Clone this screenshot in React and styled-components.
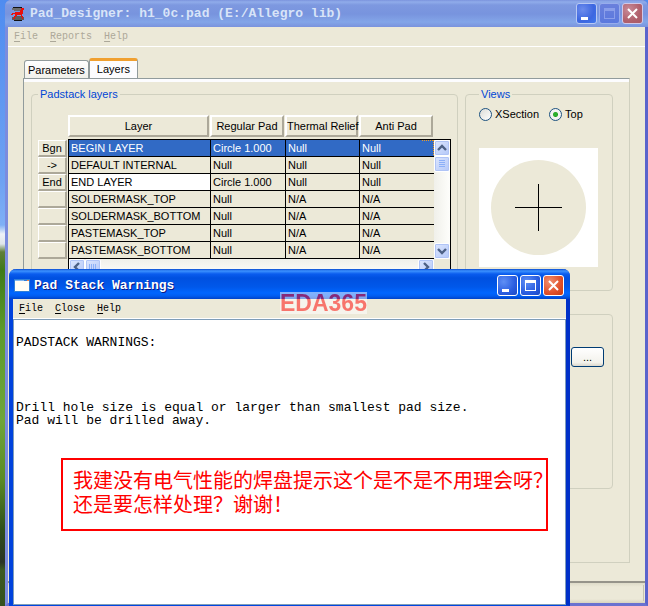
import React, { useState } from "react";
import styled, { createGlobalStyle, css } from "styled-components";

const sans = `"Liberation Sans", sans-serif`;
const mono = `"Liberation Mono", monospace`;
const face = "#ece9d8";
const line = "#d0d0bf";

const GlobalStyle = createGlobalStyle`
  * {
    box-sizing: border-box;
  }
  body {
    margin: 0;
    font-family: ${sans};
    font-size: 11px;
    line-height: 16px;
    color: #000;
  }
  button {
    margin: 0;
    padding: 0;
    border: 0;
    font: inherit;
    color: inherit;
    background: none;
  }
`;

const Desktop = styled.div`
  position: relative;
  min-height: 100vh;
  padding-left: 5px;
  display: flex;
  overflow: hidden;
  background: linear-gradient(
    #4f8cf0 0,
    #6ea2f2 180px,
    #7fb0f6 225px,
    #eef2f8 234px,
    #dfe6ea 244px,
    #5f7f3a 252px,
    #3f7a18 270px,
    #5c9a2c 330px,
    #6fa53a 420px,
    #5a8a25 480px,
    #2f4f1c 530px,
    #2a3326 562px,
    #3c5a22 570px,
    #34501e 100%
  );
`;

/* main window */

const MainWindow = styled.div`
  flex: 1;
  display: flex;
  flex-direction: column;
  border: solid #7b8cde;
  border-width: 0 3px 3px;
  border-right-color: #5a64cc;
  border-bottom-color: #6a72d0;
  border-radius: 6px 6px 0 0;
  background: ${face};
`;

const TitleBar = styled.div`
  display: flex;
  align-items: center;
  gap: 4px;
  font-family: ${mono};
  font-size: 13px;
  font-weight: bold;
  white-space: nowrap;

  h1 {
    flex: 1;
    margin: 0;
    font-size: 13px;
  }
  ${({ $active }) =>
    $active
      ? css`
          height: 30px;
          margin: 0 -4px;
          padding: 3px 6px 0 5px;
          color: #fff;
          text-shadow: 1px 1px 0 #0a1883;
          background: linear-gradient(
            #0a4bd0 0,
            #3c92ff 2px,
            #0a5cee 5px,
            #0050e0 9px,
            #0058ea 18px,
            #0066ff 24px,
            #005cf0 27px,
            #0042c8 100%
          );
          border-radius: 7px 7px 0 0;
        `
      : css`
          height: 27px;
          margin: 0 -3px;
          padding: 0 5px;
          color: #d8e4f8;
          background: linear-gradient(
            #7b93dd 0,
            #90acea 2px,
            #7d98e0 5px,
            #7894de 14px,
            #83a5e8 22px,
            #7a93dd 100%
          );
          border-radius: 6px 6px 0 0;
        `}
`;

const Caption = styled.div`
  display: flex;
  gap: 2px;
`;

const captionColors = {
  active: "radial-gradient(circle at 30% 30%, #5f8ff5, #2a5de0 60%, #1c49c4)",
  idle: "radial-gradient(circle at 30% 30%, #6d8cec, #3c66e0 60%, #3f79ee)",
  faded: "linear-gradient(#6a80dc, #5a78de)",
  close: "radial-gradient(circle at 30% 30%, #f09070, #e0502a 60%, #c23a12)",
  closeIdle: "radial-gradient(circle at 30% 30%, #c88a98, #b0606c 60%, #a85a68)",
};

const CaptionButton = styled.button`
  width: 21px;
  height: 21px;
  display: flex;
  border: 1px solid ${({ $edge }) => $edge || "#fff"};
  border-radius: 3px;
  background: ${({ $kind }) => captionColors[$kind]};

  svg {
    display: block;
  }
`;

const MenuBar = styled.div`
  display: flex;
  gap: 12px;
  height: 20px;
  font-family: ${mono};
  font-size: 10px;
  line-height: 20px;
  padding: 0 6px;
  color: ${({ $muted }) => ($muted ? "#aca899" : "#000")};
  border-bottom: 1px solid #fff;

  u {
    text-underline-offset: 2px;
  }
`;

/* tabs */

const TabStrip = styled.div`
  display: flex;
  align-items: flex-end;
  padding: 11px 0 0 16px;
`;

const Tab = styled.button`
  height: 18px;
  padding: 0 3px;
  border: 1px solid #919b9c;
  border-bottom: 0;
  border-radius: 3px 3px 0 0;
  background: linear-gradient(#fff, #f0f0ea);

  ${({ $selected }) =>
    $selected &&
    css`
      height: 20px;
      padding: 0 7px 2px;
      border-top: 3px solid #f0a030;
      background: #fcfcfe;
    `}
`;

const TabPanel = styled.div`
  margin: 0 15px;
  padding: 4px 16px 73px 7px;
  border: 1px solid ${line};
  border-top-color: #919b9c;
  border-left-color: #919b9c;
  background: linear-gradient(#fcfcfe 3px, ${face} 3px);
`;

const GroupRow = styled.div`
  display: flex;
  gap: 7px;
  margin-top: 3px;
`;

const Group = styled.fieldset`
  margin: 0;
  min-width: 0;
  height: 205px;
  padding: ${({ $pad }) => $pad};
  border: 1px solid ${line};
  border-radius: 4px;
  flex: ${({ $width }) => ($width ? `0 0 ${$width}` : 1)};

  legend {
    height: 17px;
    padding: 0 2px;
    color: #0046d5;
  }
`;

const LowerGroup = styled.div`
  display: flex;
  justify-content: flex-end;
  align-items: flex-start;
  height: 175px;
  margin-top: 23px;
  padding: 32px 8px 0;
  border: 1px solid ${line};
  border-radius: 4px;
`;

const BrowseButton = styled.button`
  width: 33px;
  height: 20px;
  border: 1px solid #003c74;
  border-radius: 3px;
  background: linear-gradient(#fff, #f3f2ec 80%, #dcd8cc);
`;

/* layers grid */

const LayerArea = styled.div`
  display: grid;
  grid-template-columns: 396px 17px;
`;

const LayerTable = styled.table`
  width: 396px;
  table-layout: fixed;
  border-collapse: separate;
  border-spacing: 0;
  white-space: nowrap;

  th,
  td {
    padding: 0;
    height: 17px;
    line-height: 16px;
    font-weight: normal;
    text-align: left;
  }
  td {
    padding-left: 2px;
    border-left: 1px solid #000;
    border-bottom: 1px solid #000;
  }
  thead th {
    height: 24px;
    vertical-align: top;
  }
  tbody tr:first-child td {
    height: 18px;
    border-top: 1px solid #000;
  }
`;

const Raised = styled.button`
  display: block;
  width: calc(100% - 1px);
  height: ${({ $height }) => $height};
  line-height: 14px;
  border: solid;
  border-width: ${({ $height }) => ($height === "22px" ? "2px" : "1px 2px 2px 1px")};
  border-color: #fff #aca899 #aca899 #fff;
  background: ${face};
  text-align: center;
`;

const Row = styled.tr`
  td {
    color: ${({ $selected }) => ($selected ? "#fff" : "#000")};
    background: ${({ $selected }) => ($selected ? "#316ac5" : face)};
  }
  td:nth-child(2) {
    background: ${({ $current }) => $current && "#fff"};
  }
  td:last-child {
    background-image: ${({ $selected }) =>
      $selected &&
      `repeating-linear-gradient(90deg, #f09a20 0 1px, transparent 1px 2px),
       repeating-linear-gradient(#f09a20 0 1px, transparent 1px 2px)`};
    background-size: 12px 1px, 1px 100%;
    background-position: top right, top right;
    background-repeat: no-repeat;
  }
`;

const VScroll = styled.div`
  display: flex;
  flex-direction: column;
  margin-top: 24px;
  border: solid #000;
  border-width: 1px 1px 0 0;
  background: linear-gradient(90deg, #f0f0ea, #fefefb);

  button:last-child {
    margin-top: auto;
  }
`;

const HScroll = styled.div`
  display: flex;
  height: 16px;
  margin-left: 30px;
  border-left: 1px solid #000;
  background: linear-gradient(#f0f0ea, #fefefb);

  button:last-child {
    margin-left: auto;
  }
`;

const ScrollCorner = styled.div`
  border-right: 1px solid #000;
`;

const ScrollButton = styled.button`
  width: 16px;
  height: 16px;
  display: flex;
  border: 1px solid #fff;
  border-radius: 2px;
  box-shadow: inset 0 0 0 1px #b0c4f6;
  background: linear-gradient(135deg, #dce6fe, #b4c8f8);
`;

/* views */

const RadioRow = styled.div`
  display: flex;
  gap: 10px;
  height: 16px;

  label {
    display: flex;
    align-items: center;
    gap: 3px;
  }
`;

const Radio = styled.input`
  appearance: none;
  width: 13px;
  height: 13px;
  margin: 0;
  border: 1px solid #1d5281;
  border-radius: 50%;
  background: linear-gradient(135deg, #dcdcd7, #fff);

  &:checked {
    background: radial-gradient(circle, #2cb02c 0 2px, #21a121 2px, #f4f4f2 3px);
  }
`;

const Preview = styled.svg`
  display: block;
  width: 119px;
  height: 119px;
  margin-top: 26px;
  background: #fff;
`;

const StatusBar = styled.div`
  display: flex;
  height: 22px;
  margin-top: auto;
  border-top: 2px solid #96948a;
  padding: 2px 1px;
  background: linear-gradient(#dedbc9, ${face} 4px, ${face} 16px, #d8d4bf);

  span {
    flex: 1;
    border-right: 1px solid #c5c2b2;
  }
`;

/* warnings window */

const WarningWindow = styled.div`
  position: absolute;
  top: 269px;
  left: 9px;
  right: 78px;
  bottom: 0;
  display: flex;
  flex-direction: column;
  border: solid #0046e0;
  border-width: 0 4px 1px;
  border-left-color: #0042dd;
  border-right-color: #0030c8;
  border-radius: 7px 7px 0 0;
  background: ${face};
`;

const Report = styled.pre`
  flex: 1;
  margin: 0;
  padding: 16px 2px;
  border: 1px solid #7f9db9;
  background: #fff;
  font-family: ${mono};
  font-size: 13px;
  line-height: 13px;
`;

const Note = styled.p`
  position: absolute;
  top: 189px;
  left: 48px;
  right: 18px;
  height: 73px;
  margin: 0;
  padding: 8px 0 0 10px;
  border: 2px solid #f00;
  color: #f00;
  font-family: "Noto Sans CJK SC", sans-serif;
  font-size: 20px;
  line-height: 24px;
  white-space: nowrap;
`;

const Watermark = styled.div`
  position: absolute;
  top: 292px;
  left: 280px;
  height: 22px;
  background: rgba(255, 255, 255, 0.5);
  font-family: "Liberation Sans", sans-serif;
  font-size: 23px;
  font-weight: bold;
  line-height: 22px;

  span {
    display: block;
    color: transparent;
    background: linear-gradient(#86297a 7px, #f7756c 7px);
    background-clip: text;
  }
`;

const LogoIcon = () => (
  <svg width="16" height="16" viewBox="0 0 16 16" shapeRendering="crispEdges">
    <path d="M3 1h9v1h2v2h-3v1H4V4H2V2h1z" fill="#6c6c6c" />
    <path d="M3 1h9v1H3z" fill="#111" />
    <path d="M2 11h3v-1h6v1h3v3h-2v1H4v-1H2z" fill="#5c5c5c" />
    <path d="M4 14h8v1H4z" fill="#111" />
    <path
      d="M11 2h3v2h-1v4h-1v2h1v3h-1v-2h-1V9H7v1H6v1H5v2H3v-1h1v-2h1V8H3v1H1V8h1V7h3V6h5V4h1z"
      fill="#e8100c"
    />
  </svg>
);

const WindowIcon = () => (
  <svg width="16" height="13" viewBox="0 0 16 13" shapeRendering="crispEdges">
    <path d="M0 0h16v13H0z" fill="#2f7fd8" />
    <path d="M1 1h9v1H1z" fill="#7fb8f4" />
    <path d="M13 1h2v1h-2z" fill="#f08040" />
    <path d="M1 2h14v10H1z" fill="#fffef4" />
  </svg>
);

const glyphs = {
  minimize: <path d="M4 13h7v3H4z" fill="currentColor" />,
  maximize: (
    <path d="M4 4h11v11H4zM5 7v7h9V7z" fill="currentColor" fillRule="evenodd" />
  ),
  close: <path d="M5 5l9 9M14 5l-9 9" stroke="currentColor" strokeWidth="2" />,
};

const arrows = {
  up: "M3 9l4-4 4 4",
  down: "M3 5l4 4 4-4",
  left: "M9 3L5 7l4 4",
  right: "M5 3l4 4-4 4",
};

const CaptionIcon = ({ name, color = "#fff" }) => (
  <svg width="19" height="19" viewBox="0 0 19 19" color={color}>
    {glyphs[name]}
  </svg>
);

const Arrow = ({ to }) => (
  <ScrollButton aria-label={`Scroll ${to}`}>
    <svg width="14" height="14" viewBox="0 0 14 14">
      <path d={arrows[to]} fill="none" stroke="#4d6185" strokeWidth="2.4" />
    </svg>
  </ScrollButton>
);

const Thumb = ({ vertical }) => (
  <ScrollButton aria-label="Scroll thumb">
    <svg width="14" height="14" viewBox="0 0 14 14">
      <path
        d={
          vertical
            ? "M4 3.5h6M4 5.5h6M4 7.5h6M4 9.5h6"
            : "M3.5 4v6M5.5 4v6M7.5 4v6M9.5 4v6"
        }
        stroke="#8cb0f8"
      />
    </svg>
  </ScrollButton>
);

const Menu = ({ items, muted }) => (
  <MenuBar $muted={muted}>
    {items.map((item) => (
      <button key={item}>
        <u>{item[0]}</u>
        {item.slice(1)}
      </button>
    ))}
  </MenuBar>
);

const columns = [
  { name: "Layer", width: 142 },
  { name: "Regular Pad", width: 75 },
  { name: "Thermal Relief", width: 74 },
  { name: "Anti Pad", width: 75 },
];

const layers = [
  { tag: "Bgn", cells: ["BEGIN LAYER", "Circle 1.000", "Null", "Null"] },
  { tag: "->", cells: ["DEFAULT INTERNAL", "Null", "Null", "Null"] },
  { tag: "End", cells: ["END LAYER", "Circle 1.000", "Null", "Null"] },
  { tag: "", cells: ["SOLDERMASK_TOP", "Null", "N/A", "N/A"] },
  { tag: "", cells: ["SOLDERMASK_BOTTOM", "Null", "N/A", "N/A"] },
  { tag: "", cells: ["PASTEMASK_TOP", "Null", "N/A", "N/A"] },
  { tag: "", cells: ["PASTEMASK_BOTTOM", "Null", "N/A", "N/A"] },
];

const report = `PADSTACK WARNINGS:




Drill hole size is equal or larger than smallest pad size.
Pad will be drilled away.`;

const PadstackLayers = () => (
  <Group $pad="12px 6px 0">
    <legend>Padstack layers</legend>
    <LayerArea>
      <LayerTable>
        <colgroup>
          <col width="30" />
          {columns.map(({ name, width }) => (
            <col key={name} width={width} />
          ))}
        </colgroup>
        <thead>
          <tr>
            <th />
            {columns.map(({ name }) => (
              <th key={name}>
                <Raised $height="22px">{name}</Raised>
              </th>
            ))}
          </tr>
        </thead>
        <tbody>
          {layers.map(({ tag, cells }, i) => (
            <Row key={cells[0]} $selected={i === 0} $current={i === 2}>
              <th>
                <Raised $height="17px" aria-label={tag ? undefined : cells[0]}>
                  {tag}
                </Raised>
              </th>
              {cells.map((cell, j) => (
                <td key={j}>{cell}</td>
              ))}
            </Row>
          ))}
        </tbody>
      </LayerTable>
      <VScroll>
        <Arrow to="up" />
        <Thumb vertical />
        <Arrow to="down" />
      </VScroll>
      <HScroll>
        <Arrow to="left" />
        <Thumb />
        <Arrow to="right" />
      </HScroll>
      <ScrollCorner />
    </LayerArea>
  </Group>
);

const Views = () => {
  const [view, setView] = useState("Top");

  return (
    <Group $pad="3px 13px 0" $width="148px">
      <legend>Views</legend>
      <RadioRow>
        {["XSection", "Top"].map((name) => (
          <label key={name}>
            <Radio
              type="radio"
              name="view"
              checked={view === name}
              onChange={() => setView(name)}
            />
            {name}
          </label>
        ))}
      </RadioRow>
      <Preview viewBox="0 0 119 119">
        <circle cx="59.5" cy="59.5" r="47.5" fill={face} />
        <path d="M36 59.5h47M59.5 36v47" stroke="#000" />
      </Preview>
    </Group>
  );
};

const App = () => {
  return (
    <>
      <GlobalStyle />
      <Desktop>
        <MainWindow>
          <TitleBar>
            <LogoIcon />
            <h1>Pad_Designer: h1_0c.pad (E:/Allegro lib)</h1>
            <Caption>
              <CaptionButton $kind="idle" $edge="#b8c8f4" aria-label="Minimize">
                <CaptionIcon name="minimize" />
              </CaptionButton>
              <CaptionButton $kind="faded" $edge="#98acec" aria-label="Maximize">
                <CaptionIcon name="maximize" color="#8a9eea" />
              </CaptionButton>
              <CaptionButton $kind="closeIdle" $edge="#d0c8e8" aria-label="Close">
                <CaptionIcon name="close" />
              </CaptionButton>
            </Caption>
          </TitleBar>
          <Menu items={["File", "Reports", "Help"]} muted />
          <TabStrip>
            <Tab>Parameters</Tab>
            <Tab $selected>Layers</Tab>
          </TabStrip>
          <TabPanel>
            <GroupRow>
              <PadstackLayers />
              <Views />
            </GroupRow>
            <LowerGroup>
              <BrowseButton>...</BrowseButton>
            </LowerGroup>
          </TabPanel>
          <StatusBar>
            <span />
          </StatusBar>
        </MainWindow>
        <WarningWindow>
          <TitleBar $active>
            <WindowIcon />
            <h1>Pad Stack Warnings</h1>
            <Caption>
              <CaptionButton $kind="active" aria-label="Minimize">
                <CaptionIcon name="minimize" />
              </CaptionButton>
              <CaptionButton $kind="active" aria-label="Maximize">
                <CaptionIcon name="maximize" />
              </CaptionButton>
              <CaptionButton $kind="close" aria-label="Close">
                <CaptionIcon name="close" />
              </CaptionButton>
            </Caption>
          </TitleBar>
          <Menu items={["File", "Close", "Help"]} />
          <Report>{report}</Report>
          <Note>
            我建没有电气性能的焊盘提示这个是不是不用理会呀？
            <br />
            还是要怎样处理？谢谢！
          </Note>
        </WarningWindow>
        <Watermark>
          <span>EDA365</span>
        </Watermark>
      </Desktop>
    </>
  );
};

export default App;
